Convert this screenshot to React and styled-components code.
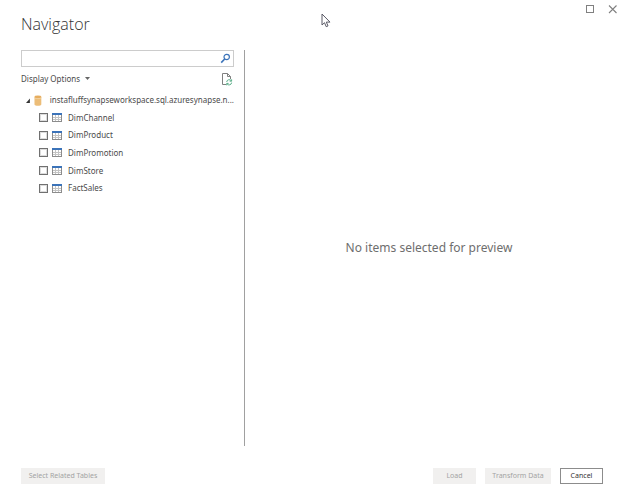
import React, { useState } from 'react';
import styled, { createGlobalStyle } from 'styled-components';

const GlobalStyle = createGlobalStyle`
  * {
    box-sizing: border-box;
  }
  body {
    margin: 0;
    background: #ffffff;
    color: #4a4a4a;
    font-family: "Noto Sans", "Open Sans", sans-serif;
    font-size: 8px;
    line-height: 12px;
  }
  button, input {
    font: inherit;
    color: inherit;
  }
`;

const Dialog = styled.div`
  min-height: 100vh;
  display: flex;
  flex-direction: column;
`;

const TitleBar = styled.header`
  display: flex;
  justify-content: flex-end;
  gap: 12px;
  height: 12px;
  padding: 3px 6px 0 0;
`;

const IconButton = styled.button`
  display: flex;
  padding: 0;
  border: none;
  background: none;
  color: #808080;
`;

const Title = styled.h1`
  margin: 0;
  padding: 0 21px;
  font-family: "Open Sans", sans-serif;
  font-size: 16px;
  font-weight: 300;
  line-height: 24px;
  color: #333333;
`;

const Content = styled.main`
  flex: 1;
  display: flex;
  padding: 14px 11px 0 21px;
`;

const Side = styled.section`
  width: 224px;
  padding-right: 10px;
  border-right: 1px solid #a0a0a0;
`;

const SearchBox = styled.div`
  display: flex;
  align-items: center;
  height: 17px;
  padding-right: 2px;
  border: 1px solid #cccccc;
`;

const SearchInput = styled.input`
  flex: 1;
  min-width: 0;
  height: 14px;
  padding: 0 4px;
  border: none;
  outline: none;
  background: none;
`;

const Options = styled.div`
  display: flex;
  align-items: center;
  justify-content: space-between;
  height: 24px;
  padding-right: 1px;
`;

const OptionsButton = styled.button`
  display: flex;
  align-items: center;
  gap: 5px;
  padding: 0;
  border: none;
  background: none;
`;

const Server = styled.div`
  display: flex;
  align-items: center;
  height: 18px;
  padding-left: 5px;
`;

const ServerName = styled.span`
  margin-left: 8px;
  white-space: nowrap;
`;

const TableList = styled.ul`
  display: grid;
  grid-auto-rows: 1fr;
  height: 88px;
  margin: 0;
  padding: 0 0 0 18px;
  list-style: none;
`;

const TableItem = styled.label`
  display: flex;
  align-items: center;
  height: 100%;
`;

const Checkbox = styled.input`
  appearance: none;
  width: 9px;
  height: 9px;
  margin: 0 4px 0 0;
  border: 1px solid #707070;
  background: #ffffff;
  box-shadow: inset 0 0 0 1px #dcdcdc;
  &:checked {
    background: #707070;
  }
`;

const TableName = styled.span`
  margin-left: 6px;
`;

const Preview = styled.section`
  flex: 1;
  display: flex;
  align-items: center;
  justify-content: center;
  font-size: 12px;
  line-height: 18px;
  color: #6e6e6e;
`;

const Footer = styled.footer`
  display: flex;
  gap: 9px;
  padding: 22px 21px 12px;
`;

const Button = styled.button`
  height: 16px;
  min-width: ${({ $width }) => $width};
  margin-right: ${({ $first }) => ($first ? 'auto' : '0')};
  padding: 0;
  border: 1px solid #8c8c8c;
  background: #ffffff;
  color: #333333;
  font-size: 7px;
  line-height: 12px;
  &:disabled {
    border-color: #f1f0ef;
    background: #f1f0ef;
    color: #a3a3a3;
  }
`;

const Pointer = styled.svg`
  position: absolute;
  left: 321px;
  top: 13px;
`;

const MaximizeIcon = () => (
  <svg width="11" height="12" viewBox="0 0 11 12" fill="none" stroke="currentColor">
    <rect x="2.5" y="2.5" width="7" height="7" />
  </svg>
);

const CloseIcon = () => (
  <svg width="11" height="12" viewBox="0 0 11 12" fill="none" stroke="currentColor">
    <path d="M2 2.5l7.5 7.5M9.5 2.5L2 10" strokeWidth="1.1" />
  </svg>
);

const SearchIcon = () => (
  <svg width="11" height="11" viewBox="0 0 11 11" fill="none" stroke="#3b73b9">
    <circle cx="6.7" cy="4" r="2.7" strokeWidth="1.2" />
    <path d="M4.7 6L1.2 9.6" strokeWidth="1.6" />
  </svg>
);

const RefreshIcon = () => (
  <svg width="12" height="13" viewBox="0 0 12 13" fill="none">
    <path d="M5 11.5H1.5V.5h5l3 3V6M6.5.5v3h3" stroke="#808080" />
    <path d="M5.7 9a2.5 2.5 0 0 1 4.5-1.3M10.6 6.3v1.9H8.7M10.6 9.6a2.5 2.5 0 0 1-4.5 1.3M5.7 12.3v-1.9h1.9" stroke="#4ba67d" strokeWidth=".9" />
  </svg>
);

const DownArrow = () => (
  <svg width="5" height="4" viewBox="0 0 5 4">
    <path d="M0 0h5L2.5 3z" fill="#666666" />
  </svg>
);

const ExpandedIcon = () => (
  <svg width="4" height="5" viewBox="0 0 4 5">
    <path d="M4 .5v4.5H0z" fill="#333333" />
  </svg>
);

const DatabaseIcon = styled.svg`
  margin-left: 4px;
`;

const TableIcon = () => (
  <svg width="10" height="9" viewBox="0 0 10 9">
    <rect x=".5" y=".5" width="9" height="8" fill="#ffffff" stroke="#8c8c8c" />
    <path d="M1 4.5h8M1 6.5h8M3.5 2v6M6.5 2v6" stroke="#c4c4c4" />
    <path d="M0 0h10v2H0z" fill="#3b73b9" />
  </svg>
);

const tables = ['DimChannel', 'DimProduct', 'DimPromotion', 'DimStore', 'FactSales'];

const App = () => {
  const [search, setSearch] = useState('');

  return (
    <Dialog>
      <GlobalStyle />
      <TitleBar>
        <IconButton aria-label="Maximize"><MaximizeIcon /></IconButton>
        <IconButton aria-label="Close"><CloseIcon /></IconButton>
      </TitleBar>
      <Title>Navigator</Title>
      <Content>
        <Side>
          <SearchBox>
            <SearchInput
              type="text"
              aria-label="Search"
              value={search}
              onChange={(e) => setSearch(e.target.value)}
            />
            <IconButton aria-label="Start search"><SearchIcon /></IconButton>
          </SearchBox>
          <Options>
            <OptionsButton>Display Options <DownArrow /></OptionsButton>
            <IconButton aria-label="Refresh"><RefreshIcon /></IconButton>
          </Options>
          <Server>
            <ExpandedIcon />
            <DatabaseIcon width="8" height="11" viewBox="0 0 8 11">
              <path d="M.5 2v7.5C.5 11.3 7.5 11.3 7.5 9.5V2z" fill="#ecbd78" />
              <ellipse cx="4" cy="1.8" rx="3.5" ry="1.5" fill="#e6ad5f" />
              <path d="M.5 2.3c0 1.7 7 1.7 7 0" fill="none" stroke="#f8e3c3" strokeWidth=".6" />
            </DatabaseIcon>
            <ServerName>instafluffsynapseworkspace.sql.azuresynapse.n...</ServerName>
          </Server>
          <TableList>
            {tables.map((name) => (
              <li key={name}>
                <TableItem>
                  <Checkbox type="checkbox" />
                  <TableIcon />
                  <TableName>{name}</TableName>
                </TableItem>
              </li>
            ))}
          </TableList>
        </Side>
        <Preview>No items selected for preview</Preview>
      </Content>
      <Footer>
        <Button $width="84px" $first disabled>Select Related Tables</Button>
        <Button $width="43px" disabled>Load</Button>
        <Button $width="66px" disabled>Transform Data</Button>
        <Button $width="43px">Cancel</Button>
      </Footer>
      <Pointer width="10" height="15" viewBox="0 0 10 15">
        <path d="M1 1v11l2.5-2.3 1.7 4 1.8-.8-1.7-3.8H9z" fill="#ffffff" stroke="#5a5a66" />
      </Pointer>
    </Dialog>
  );
};

export default App;
